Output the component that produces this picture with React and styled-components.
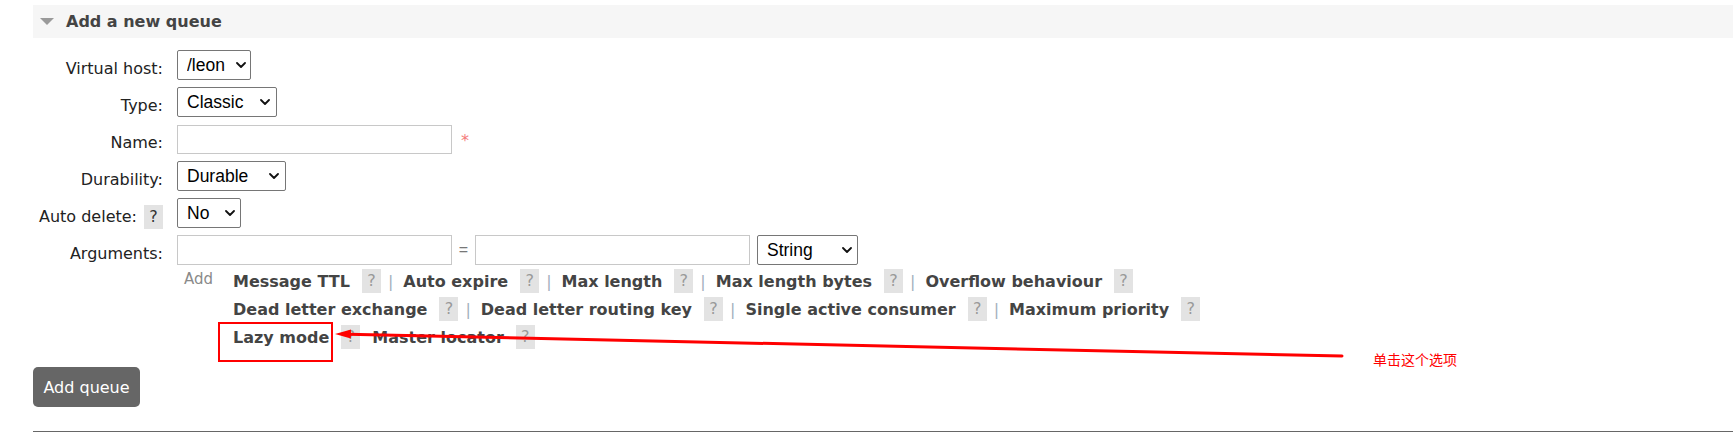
import React from 'react';
import styled, { createGlobalStyle } from 'styled-components';

const GlobalStyle = createGlobalStyle`
  html, body { margin: 0; padding: 0; background: #fff; }
  body { font-family: "DejaVu Sans", Verdana, sans-serif; color: #222; }
`;

const Page = styled.div`
  position: relative;
  width: 1733px;
  height: 436px;
  overflow: hidden;
  padding: 5px 0 0 33px;
  box-sizing: border-box;
`;

const SectionHeader = styled.div`
  display: flex;
  align-items: center;
  height: 33px;
  background: #f6f6f6;
  padding-left: 7px;
  gap: 12px;
  font-size: 16px;
  font-weight: bold;
  color: #444;
`;

const Form = styled.div`
  display: grid;
  grid-template-columns: 130px auto;
  column-gap: 14px;
  row-gap: 7px;
  margin-top: 12px;
  justify-content: start;
`;

const Label = styled.div`
  display: flex;
  justify-content: flex-end;
  align-items: flex-start;
  gap: 7px;
  height: 30px;
  box-sizing: border-box;
  padding-top: 7px;
  font-size: 16px;
  line-height: 23px;
  color: #222;
  white-space: nowrap;
`;

const Cell = styled.div`
  display: flex;
  align-items: center;
  gap: 9px;
  min-height: 30px;
`;

const ArgCell = styled.div`
  display: flex;
  flex-direction: column;
`;

const SelectWrap = styled.div`
  position: relative;
  width: ${p => p.w}px;
  height: 30px;
  svg {
    position: absolute;
    right: ${p => p.r || 6}px;
    top: 12px;
    pointer-events: none;
  }
`;

const Select = styled.select`
  appearance: none;
  -webkit-appearance: none;
  width: 100%;
  height: 100%;
  box-sizing: border-box;
  border: 1px solid #767676;
  border-radius: 2px;
  background: #fff;
  padding: 0 0 0 9px;
  font-family: "Liberation Sans", Arial, sans-serif;
  font-size: 17.5px;
  color: #000;
  outline: none;
`;

const TextInput = styled.input`
  width: ${p => p.w || 275}px;
  height: ${p => p.h || 30}px;
  box-sizing: border-box;
  border: 1px solid #c8c8c8;
  border-radius: 0;
  padding: 0 4px;
  font-size: 16px;
  outline: none;
`;

const Required = styled.span`
  color: #f47a7a;
  font-size: 16px;
  line-height: 16px;
  margin-top: 3px;
`;

const ArgRow = styled.div`
  display: flex;
  align-items: center;
  height: 30px;
`;

const Equals = styled.span`
  width: 23px;
  text-align: center;
  font-family: "Liberation Sans", Arial, sans-serif;
  font-size: 16px;
  color: #777;
`;

const TypeSelect = styled.div`
  margin-left: 7px;
`;

const AddBlock = styled.div`
  display: flex;
  margin-top: 2px;
`;

const AddLabel = styled.div`
  width: 49px;
  padding-left: 7px;
  font-size: 15px;
  line-height: 25px;
  color: #8a8a8a;
`;

const Lines = styled.div`
  display: flex;
  flex-direction: column;
`;

const Line = styled.div`
  display: flex;
  align-items: center;
  height: 28px;
  white-space: nowrap;
`;

const ArgLink = styled.span`
  font-size: 16px;
  font-weight: bold;
  color: #444;
  margin-right: 12px;
`;

const Help = styled.span`
  display: inline-block;
  width: 19px;
  height: 24px;
  line-height: 24px;
  text-align: center;
  background: #e3e3e3;
  color: ${p => (p.$dark ? '#333' : '#999')};
  font-size: 16px;
  flex-shrink: 0;
`;

const Sep = styled.span`
  font-size: 16px;
  color: #a3afbd;
  margin: 0 10px 0 7px;
`;

const Gap = styled.span`
  width: 12px;
`;

const Button = styled.button`
  display: block;
  margin-top: 16px;
  height: 40px;
  width: 107px;
  border: none;
  border-radius: 5px;
  background: #666;
  color: #fff;
  font-family: "DejaVu Sans", Verdana, sans-serif;
  font-size: 16px;
  padding: 0;
`;

const Rule = styled.hr`
  margin: 24px 0 0;
  border: none;
  border-top: 1px solid #666;
`;

const Highlight = styled.div`
  position: absolute;
  left: 218px;
  top: 322px;
  width: 115px;
  height: 40px;
  box-sizing: border-box;
  border: 2px solid #ff0000;
`;

const ArrowLayer = styled.svg`
  position: absolute;
  left: 0;
  top: 0;
  pointer-events: none;
`;

const Note = styled.span`
  position: absolute;
  left: 1373px;
  top: 349px;
  font-family: "Noto Sans CJK SC", sans-serif;
  font-size: 14px;
  line-height: 20px;
  color: #ff0000;
`;

const Caret = () => (
  <svg width="10" height="6" viewBox="0 0 10 6">
    <path d="M1 1 L5 5 L9 1" fill="none" stroke="#111" strokeWidth="1.8" strokeLinecap="round" strokeLinejoin="round" />
  </svg>
);

const Dropdown = ({ w, r, value }) => (
  <SelectWrap w={w} r={r}>
    <Select defaultValue={value}>
      <option>{value}</option>
    </Select>
    <Caret />
  </SelectWrap>
);

const argLines = [
  { sep: true, items: ['Message TTL', 'Auto expire', 'Max length', 'Max length bytes', 'Overflow behaviour'] },
  { sep: true, items: ['Dead letter exchange', 'Dead letter routing key', 'Single active consumer', 'Maximum priority'] },
  { sep: false, items: ['Lazy mode', 'Master locator'] },
];

export default function App() {
  return (
    <Page>
      <GlobalStyle />
      <SectionHeader>
        <svg width="14" height="7" viewBox="0 0 14 7">
          <path d="M0 0 H14 L7 7 Z" fill="#9a9a9a" />
        </svg>
        Add a new queue
      </SectionHeader>

      <Form>
        <Label>Virtual host:</Label>
        <Cell><Dropdown w={74} r={5} value="/leon" /></Cell>

        <Label>Type:</Label>
        <Cell><Dropdown w={100} r={7} value="Classic" /></Cell>

        <Label>Name:</Label>
        <Cell>
          <TextInput w={275} h={29} />
          <Required>*</Required>
        </Cell>

        <Label>Durability:</Label>
        <Cell><Dropdown w={109} r={7} value="Durable" /></Cell>

        <Label>Auto delete: <Help $dark>?</Help></Label>
        <Cell><Dropdown w={64} r={6} value="No" /></Cell>

        <Label>Arguments:</Label>
        <ArgCell>
          <ArgRow>
            <TextInput />
            <Equals>=</Equals>
            <TextInput />
            <TypeSelect><Dropdown w={101} r={6} value="String" /></TypeSelect>
          </ArgRow>
          <AddBlock>
            <AddLabel>Add</AddLabel>
            <Lines>
              {argLines.map((line, i) => (
                <Line key={i}>
                  {line.items.map((name, j) => (
                    <React.Fragment key={name}>
                      {j > 0 && (line.sep ? <Sep>|</Sep> : <Gap />)}
                      <ArgLink>{name}</ArgLink>
                      <Help>?</Help>
                    </React.Fragment>
                  ))}
                </Line>
              ))}
            </Lines>
          </AddBlock>
        </ArgCell>
      </Form>

      <Button>Add queue</Button>
      <Rule />

      <Highlight />
      <ArrowLayer width="1733" height="436">
        <line x1="1342" y1="356" x2="348" y2="334.3" stroke="#ff0000" strokeWidth="3" strokeLinecap="round" />
        <path d="M335 334 L351 329.5 L350.8 338.5 Z" fill="#ff0000" />
      </ArrowLayer>
      <Note>单击这个选项</Note>
    </Page>
  );
}
